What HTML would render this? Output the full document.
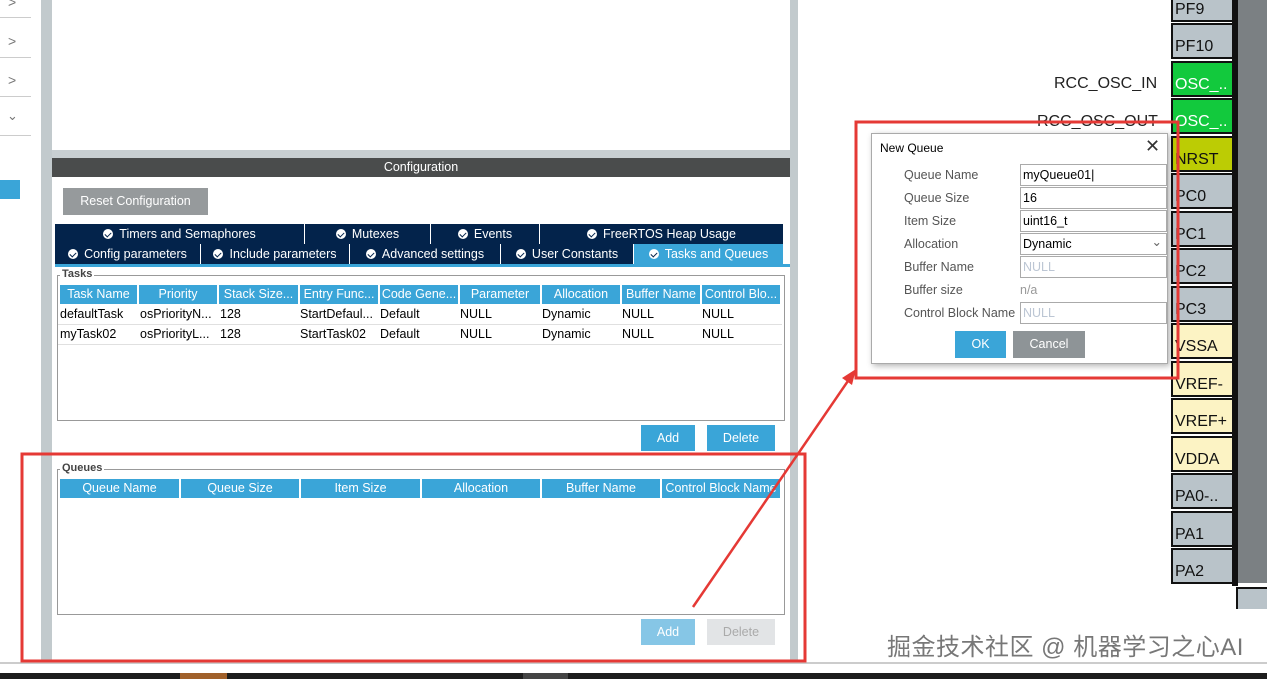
<!DOCTYPE html>
<html><head><meta charset="utf-8"><style>
*{margin:0;padding:0;box-sizing:border-box}
body{width:1267px;height:679px;position:relative;overflow:hidden;background:#fff;font-family:"Liberation Sans","Noto Sans CJK SC",sans-serif;font-size:13px;color:#000}
.a{position:absolute}
.tab{position:absolute;background:#03234b;color:#fff;font-size:12.5px;text-align:center;line-height:20px;border-right:1px solid #fff;white-space:nowrap}
.tab i{display:inline-block;width:10px;height:10px;border-radius:50%;background:#fff;margin-right:6px;vertical-align:-1px;position:relative}
.tab i:after{content:"";position:absolute;left:3px;top:2px;width:3px;height:5px;border:solid #03234b;border-width:0 1.5px 1.5px 0;transform:rotate(45deg)}
.th{position:absolute;background:#3aa5d8;color:#fff;font-size:12.5px;text-align:center;line-height:19px;white-space:nowrap;overflow:hidden}
.td{position:absolute;font-size:12.5px;line-height:20px;white-space:nowrap;overflow:hidden;border-bottom:1px solid #e0e0e0;padding-left:2px}
.btn{position:absolute;color:#fff;font-size:12.5px;text-align:center;line-height:26px}
.pin{position:absolute;left:1171px;width:63px;height:36px;border:2px solid #111;background:#b9c3c9;font-family:"Liberation Sans",sans-serif;font-size:16px;padding:12px 0 0 2px;line-height:20px;overflow:hidden;white-space:nowrap;color:#111}
.lbl{position:absolute;left:904px;color:#555;font-size:12.5px}
.in{position:absolute;left:1020px;width:147px;height:22px;border:1px solid #aaa;font-size:12.5px;line-height:20px;padding-left:2px}
</style></head><body>
<div class="a" style="left:0;top:17px;width:31px;height:1px;background:#ccc"></div>
<div class="a" style="left:0;top:57px;width:31px;height:1px;background:#ccc"></div>
<div class="a" style="left:0;top:96px;width:31px;height:1px;background:#ccc"></div>
<div class="a" style="left:0;top:135px;width:31px;height:1px;background:#ccc"></div>
<div class="a" style="left:8px;top:-6px;color:#777;font-size:14px">&gt;</div>
<div class="a" style="left:8px;top:33px;color:#777;font-size:14px">&gt;</div>
<div class="a" style="left:8px;top:72px;color:#777;font-size:14px">&gt;</div>
<div class="a" style="left:7px;top:108px;color:#777;font-size:13px">&#8964;</div>
<div class="a" style="left:0;top:180px;width:20px;height:19px;background:#3aa5d8"></div>
<div class="a" style="left:41px;top:0;width:11px;height:662px;background:#c2cacd"></div>
<div class="a" style="left:790px;top:0;width:8px;height:662px;background:#c2cacd"></div>
<div class="a" style="left:52px;top:150px;width:738px;height:8px;background:#c8cfd2"></div>
<div class="a" style="left:52px;top:158px;width:738px;height:19px;background:#4a4c4c;color:#fff;text-align:center;line-height:19px;font-size:12.5px">Configuration</div>
<div class="btn" style="left:63px;top:188px;width:145px;height:27px;background:#969a9c">Reset Configuration</div>
<div class="tab" style="left:55px;top:224px;width:250px"><i></i>Timers and Semaphores</div>
<div class="tab" style="left:305px;top:224px;width:126px"><i></i>Mutexes</div>
<div class="tab" style="left:431px;top:224px;width:109px"><i></i>Events</div>
<div class="tab" style="left:540px;top:224px;width:244px"><i></i>FreeRTOS Heap Usage</div>
<div class="tab" style="left:55px;top:244px;width:146px"><i></i>Config parameters</div>
<div class="tab" style="left:201px;top:244px;width:149px"><i></i>Include parameters</div>
<div class="tab" style="left:350px;top:244px;width:151px"><i></i>Advanced settings</div>
<div class="tab" style="left:501px;top:244px;width:133px"><i></i>User Constants</div>
<div class="tab" style="left:634px;top:244px;width:150px;background:#3aa5d8"><i></i>Tasks and Queues</div>
<div class="a" style="left:55px;top:264px;width:735px;height:3px;background:#3aa5d8"></div>
<div class="a" style="left:57px;top:275px;width:728px;height:146px;border:1px solid #999"></div>
<div class="a" style="left:60px;top:268px;background:#fff;font-size:11px;font-weight:bold;color:#444;padding:0 2px">Tasks</div>
<div class="th" style="left:60px;top:285px;width:77px">Task Name</div>
<div class="th" style="left:139px;top:285px;width:78px">Priority</div>
<div class="th" style="left:219px;top:285px;width:79px">Stack Size...</div>
<div class="th" style="left:300px;top:285px;width:78px">Entry Func...</div>
<div class="th" style="left:380px;top:285px;width:78px">Code Gene...</div>
<div class="th" style="left:460px;top:285px;width:80px">Parameter</div>
<div class="th" style="left:542px;top:285px;width:78px">Allocation</div>
<div class="th" style="left:622px;top:285px;width:78px">Buffer Name</div>
<div class="th" style="left:702px;top:285px;width:78px">Control Blo...</div>
<div class="td" style="left:58px;top:304px;width:80px">defaultTask</div>
<div class="td" style="left:138px;top:304px;width:80px">osPriorityN...</div>
<div class="td" style="left:218px;top:304px;width:80px">128</div>
<div class="td" style="left:298px;top:304px;width:80px">StartDefaul...</div>
<div class="td" style="left:378px;top:304px;width:80px">Default</div>
<div class="td" style="left:458px;top:304px;width:82px">NULL</div>
<div class="td" style="left:540px;top:304px;width:80px">Dynamic</div>
<div class="td" style="left:620px;top:304px;width:80px">NULL</div>
<div class="td" style="left:700px;top:304px;width:82px">NULL</div>
<div class="td" style="left:58px;top:324px;width:80px">myTask02</div>
<div class="td" style="left:138px;top:324px;width:80px">osPriorityL...</div>
<div class="td" style="left:218px;top:324px;width:80px">128</div>
<div class="td" style="left:298px;top:324px;width:80px">StartTask02</div>
<div class="td" style="left:378px;top:324px;width:80px">Default</div>
<div class="td" style="left:458px;top:324px;width:82px">NULL</div>
<div class="td" style="left:540px;top:324px;width:80px">Dynamic</div>
<div class="td" style="left:620px;top:324px;width:80px">NULL</div>
<div class="td" style="left:700px;top:324px;width:82px">NULL</div>
<div class="btn" style="left:641px;top:425px;width:54px;background:#3aa5d8">Add</div>
<div class="btn" style="left:707px;top:425px;width:68px;background:#3aa5d8">Delete</div>
<div class="a" style="left:57px;top:469px;width:728px;height:146px;border:1px solid #999"></div>
<div class="a" style="left:60px;top:462px;background:#fff;font-size:11px;font-weight:bold;color:#444;padding:0 2px">Queues</div>
<div class="th" style="left:60px;top:479px;width:119px">Queue Name</div>
<div class="th" style="left:181px;top:479px;width:118px">Queue Size</div>
<div class="th" style="left:301px;top:479px;width:119px">Item Size</div>
<div class="th" style="left:422px;top:479px;width:118px">Allocation</div>
<div class="th" style="left:542px;top:479px;width:118px">Buffer Name</div>
<div class="th" style="left:662px;top:479px;width:118px">Control Block Name</div>
<div class="btn" style="left:641px;top:619px;width:54px;background:#86c6e6">Add</div>
<div class="btn" style="left:707px;top:619px;width:68px;background:#e2e4e6;color:#aaa">Delete</div>
<div class="a" style="left:0;top:662px;width:1267px;height:2px;background:#ccc"></div>
<div class="a" style="left:0;top:673px;width:1267px;height:6px;background:#1d1d1d"></div>
<div class="a" style="left:180px;top:673px;width:47px;height:6px;background:#a0602a"></div>
<div class="a" style="left:523px;top:673px;width:45px;height:6px;background:#444"></div>
<div class="a" style="left:1232px;top:0;width:6px;height:586px;background:#111"></div>
<div class="a" style="left:1238px;top:0;width:29px;height:583px;background:#7b8083"></div>
<div class="a" style="left:1236px;top:587px;width:31px;height:22px;background:#b9c3c9;border-left:2px solid #111;border-top:2px solid #111"></div>
<div class="pin" style="top:-14px">PF9</div>
<div class="pin" style="top:23px">PF10</div>
<div class="pin" style="top:61px;background:#12c93d;color:#fff">OSC_..</div>
<div class="pin" style="top:98px;background:#12c93d;color:#fff">OSC_..</div>
<div class="pin" style="top:136px;background:#bccc04">NRST</div>
<div class="pin" style="top:173px">PC0</div>
<div class="pin" style="top:211px">PC1</div>
<div class="pin" style="top:248px">PC2</div>
<div class="pin" style="top:286px">PC3</div>
<div class="pin" style="top:323px;background:#fcf3c4">VSSA</div>
<div class="pin" style="top:361px;background:#fcf3c4">VREF-</div>
<div class="pin" style="top:398px;background:#fcf3c4">VREF+</div>
<div class="pin" style="top:436px;background:#fcf3c4">VDDA</div>
<div class="pin" style="top:473px">PA0-..</div>
<div class="pin" style="top:511px">PA1</div>
<div class="pin" style="top:548px">PA2</div>
<div class="a" style="left:1054px;top:75px;font-size:16px;color:#222">RCC_OSC_IN</div>
<div class="a" style="left:1037px;top:113px;font-size:16px;color:#222">RCC_OSC_OUT</div>
<div class="a" style="left:871px;top:133px;width:297px;height:231px;background:#fff;border:1px solid #aaa;box-shadow:2px 2px 6px rgba(0,0,0,.3)"></div>
<div class="a" style="left:880px;top:141px;font-size:12px">New Queue</div>
<div class="a" style="left:1145px;top:136px;font-size:18px;color:#333">&#x2715;</div>
<div class="lbl" style="top:168px">Queue Name</div>
<div class="lbl" style="top:191px">Queue Size</div>
<div class="lbl" style="top:214px">Item Size</div>
<div class="lbl" style="top:237px">Allocation</div>
<div class="lbl" style="top:260px">Buffer Name</div>
<div class="lbl" style="top:283px">Buffer size</div>
<div class="lbl" style="top:306px">Control Block Name</div>
<div class="in" style="top:164px">myQueue01|</div>
<div class="in" style="top:187px">16</div>
<div class="in" style="top:210px">uint16_t</div>
<div class="in" style="top:233px">Dynamic<span style="position:absolute;right:4px;top:-2px;color:#666">&#8964;</span></div>
<div class="in" style="top:256px;color:#bcc6d4">NULL</div>
<div class="a" style="left:1020px;top:283px;color:#999;font-size:12.5px">n/a</div>
<div class="in" style="top:302px;color:#bcc6d4">NULL</div>
<div class="btn" style="left:955px;top:331px;width:51px;height:27px;background:#3aa5d8">OK</div>
<div class="btn" style="left:1013px;top:331px;width:72px;height:27px;background:#8e9497">Cancel</div>
<svg class="a" style="left:0;top:0" width="1267" height="679">
<rect x="22" y="454" width="783" height="207" fill="none" stroke="#e53935" stroke-width="3"/>
<rect x="856" y="122" width="322" height="256" fill="none" stroke="#e53935" stroke-width="3"/>
<line x1="693" y1="607" x2="850" y2="378" stroke="#e53935" stroke-width="2.5"/>
<polygon points="856,369 842,378 852,385" fill="#e53935"/>
</svg>
<div class="a" style="left:887px;top:627px;font-size:24px;letter-spacing:0.5px;color:#777;text-shadow:1px 1px 0 #fff,-1px -1px 0 #fff,1px -1px 0 #fff,-1px 1px 0 #fff;white-space:nowrap">掘金技术社区 @ 机器学习之心AI</div>
</body></html>
